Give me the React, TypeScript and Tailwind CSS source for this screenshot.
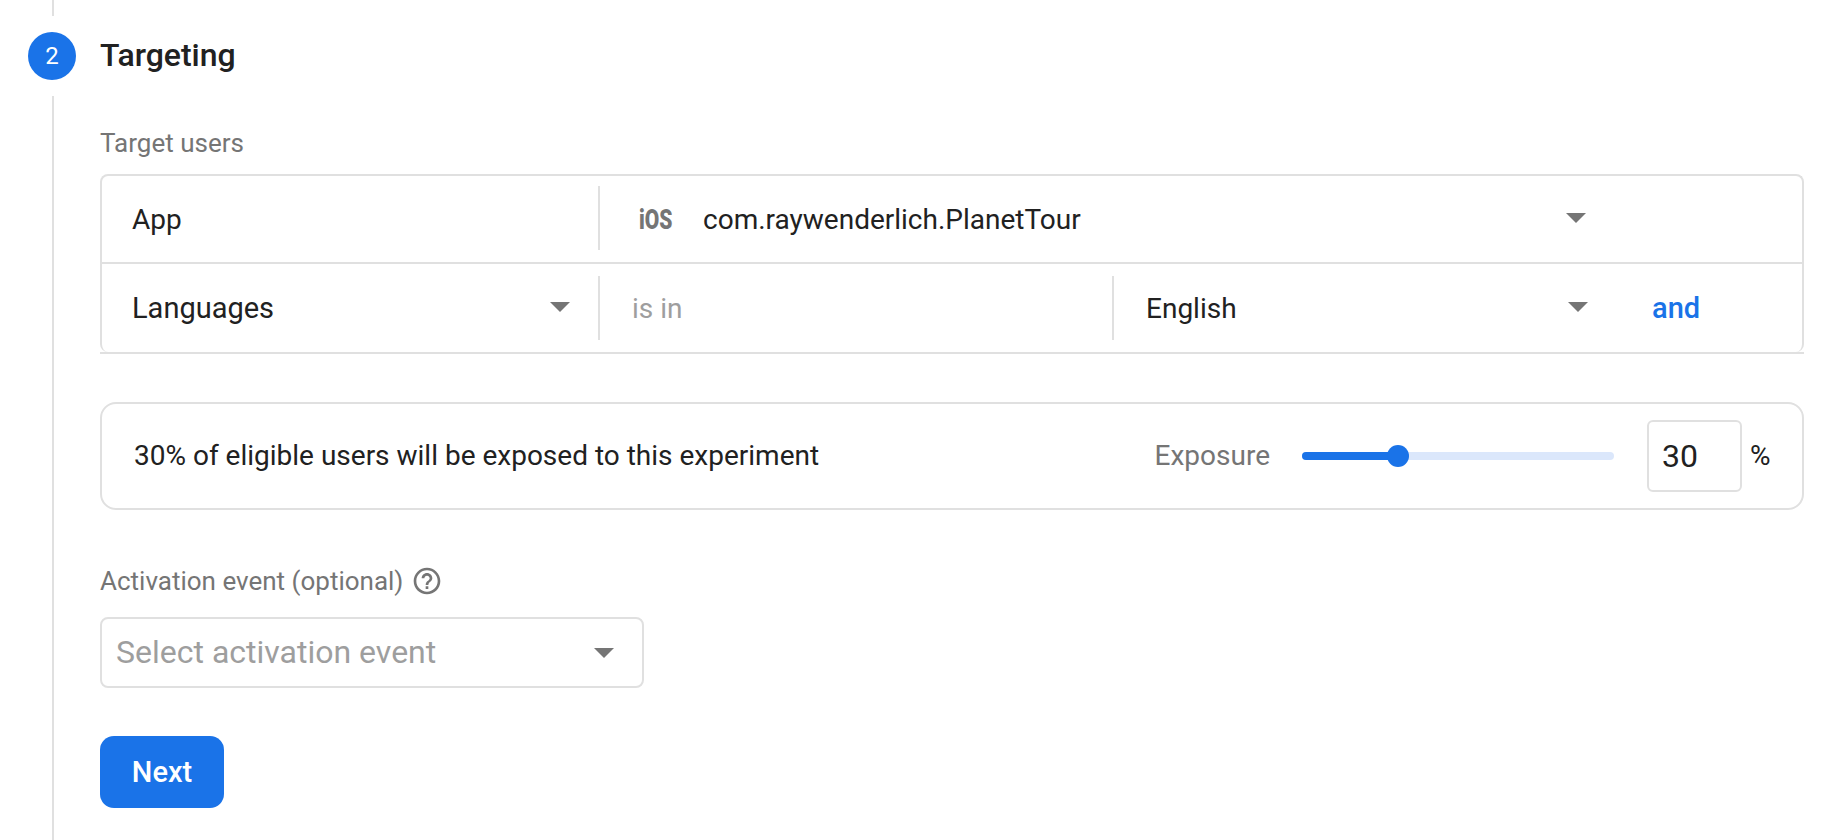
const Caret = ({ className = "" }: { className?: string }) => (
  <svg width="20" height="10" viewBox="0 0 20 10" className={className}>
    <path d="M0 0h20L10 10z" fill="#757575" />
  </svg>
);

const Divider = ({ className = "" }: { className?: string }) => (
  <div className={`w-[2px] h-[64px] bg-[#e0e0e0] shrink-0 ${className}`} />
);

export default function App() {
  return (
    <div className="w-[1844px] h-[840px] overflow-hidden bg-white pl-[28px] font-['Roboto',sans-serif] text-[#212121]">
      <div className="ml-[24px] w-[2px] h-[16px] bg-[#e0e0e0]" />
      <div className="mt-[16px] flex items-center h-[48px]">
        <div className="w-[48px] h-[48px] rounded-full bg-[#1a73e8] text-white flex items-center justify-center text-[24px]">
          2
        </div>
        <div className="ml-[24px] pb-[2px] text-[32px] font-medium">Targeting</div>
      </div>
      <div className="mt-[16px] ml-[24px] h-[744px] border-l-2 border-[#e0e0e0] pl-[46px] pr-[40px]">
        <div className="pt-[32px] h-[78px] text-[26px] leading-[30px] text-[#757575]">Target users</div>
        <div className="border-b-2 border-[#e0e0e0]">
          <div className="border-2 border-b-0 border-[#e0e0e0] rounded-[8px] h-[178px]">
            <div className="h-[88px] border-b-2 border-[#e0e0e0] flex items-center">
              <div className="w-[496px] pl-[30px] pt-[2px] text-[28px]">App</div>
              <Divider className="-mt-[2px]" />
              <div className="ml-[39px] w-[36px] pt-[2px] text-[28px] leading-none font-black text-[#757575] origin-left scale-x-[0.75]">iOS</div>
              <div className="ml-[28px] w-[863px] pt-[2px] text-[28px]">com.raywenderlich.PlanetTour</div>
              <Caret className="-mt-[2px]" />
            </div>
            <div className="h-[88px] flex items-center">
              <div className="w-[496px] pl-[30px] pr-[28px] flex items-center justify-between text-[29px]">
                <span className="pt-[2px]">Languages</span>
                <Caret className="-mt-[2px]" />
              </div>
              <Divider />
              <div className="w-[512px] pl-[32px] pt-[2px] text-[28px] text-[#9e9e9e]">is in</div>
              <Divider />
              <div className="w-[474px] pl-[32px] flex items-center justify-between text-[28px]">
                <span className="pt-[2px]">English</span>
                <Caret className="-mt-[2px]" />
              </div>
              <div className="ml-[64px] pt-[2px] text-[29px] font-medium text-[#1a73e8]">and</div>
            </div>
          </div>
        </div>
        <div className="mt-[48px] h-[108px] border-2 border-[#e0e0e0] rounded-[16px] flex items-center">
          <div className="pl-[32px] flex-1 text-[28px]">30% of eligible users will be exposed to this experiment</div>
          <div className="text-[28px] text-[#757575]">Exposure</div>
          <div className="relative ml-[32px] w-[312px] h-[8px] rounded-full bg-[#dbe7fb]">
            <div className="w-[96px] h-[8px] rounded-full bg-[#1a73e8]" />
            <div className="absolute left-[85px] top-[-7px] w-[22px] h-[22px] rounded-full bg-[#1a73e8]" />
          </div>
          <div className="ml-[33px] w-[95px] h-[72px] border-2 border-[#e0e0e0] rounded-[6px] pl-[13px] flex items-center text-[32px]">
            30
          </div>
          <div className="ml-[8px] mr-[31px] w-[21px] text-[28px]">%</div>
        </div>
        <div className="mt-[53px] h-[36px] flex items-center text-[26px] text-[#757575]">
          Activation event (optional)
          <svg width="32" height="32" viewBox="0 0 24 24" className="ml-[8px]" fill="#757575">
            <path d="M11 18h2v-2h-2v2zm1-16C6.48 2 2 6.48 2 12s4.48 10 10 10 10-4.48 10-10S17.52 2 12 2zm0 18c-4.41 0-8-3.59-8-8s3.59-8 8-8 8 3.59 8 8-3.59 8-8 8zm0-14c-2.21 0-4 1.79-4 4h2c0-1.1.9-2 2-2s2 .9 2 2c0 2-3 1.75-3 5h2c0-2.25 3-2.5 3-5 0-2.21-1.79-4-4-4z" />
          </svg>
        </div>
        <div className="mt-[18px] w-[544px] h-[71px] border-2 border-[#e0e0e0] rounded-[8px] pl-[14px] pr-[28px] flex items-center justify-between text-[32px] text-[#9e9e9e]">
          <span className="pb-[2px]">Select activation event</span>
          <Caret />
        </div>
        <button className="mt-[48px] block w-[124px] h-[72px] pt-[2px] rounded-[14px] bg-[#1a73e8] text-white text-[29px] font-medium">
          Next
        </button>
      </div>
    </div>
  );
}
